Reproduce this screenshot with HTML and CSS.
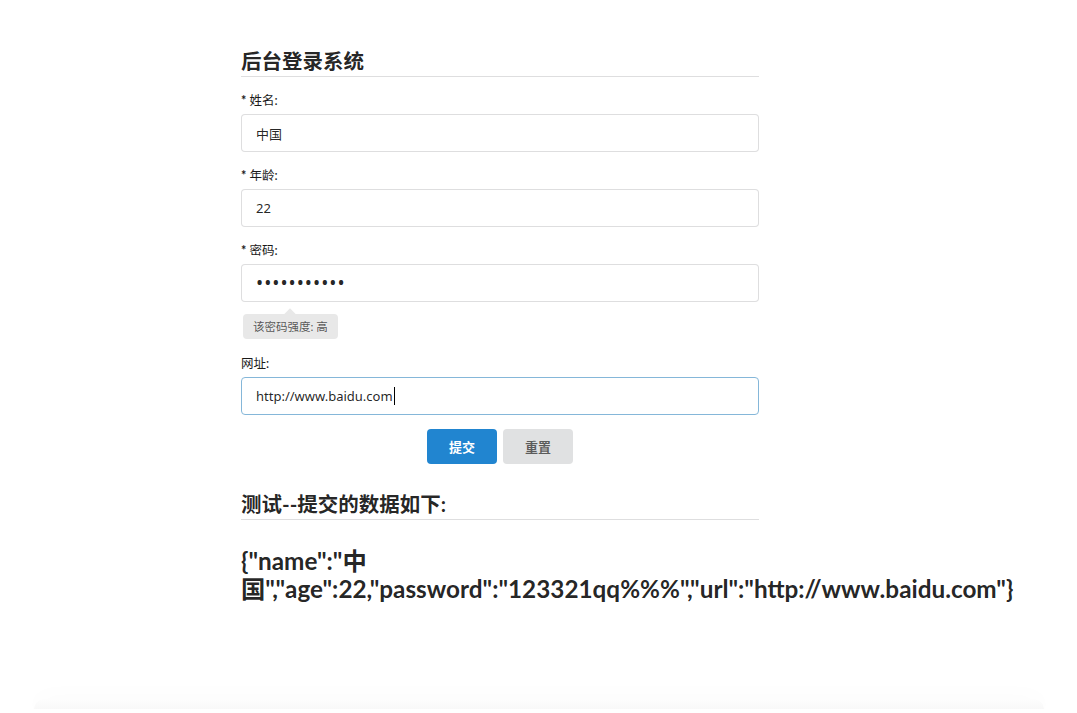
FILE: index.html
```html
<!DOCTYPE html>
<html lang="zh-CN">
<head>
    <meta charset="UTF-8">
    <meta name="viewport" content="width=device-width, initial-scale=1.0">
    <title>后台登录系统</title>
    <link rel="stylesheet" href="styles.css">
</head>
<body>
    <div class="page">
        <form class="login-form">
            <h3 class="dividing-header">后台登录系统</h3>

            <div class="field">
                <label><b>*</b> 姓名:</label>
                <input type="text" value="中国">
            </div>

            <div class="field">
                <label><b>*</b> 年龄:</label>
                <input type="text" value="22">
            </div>

            <div class="field">
                <label><b>*</b> 密码:</label>
                <input type="password" value="123321qq%%%">
                <div class="pointing-label">该密码强度: 高</div>
            </div>

            <div class="field url-field">
                <label>网址:</label>
                <input type="text" class="focused" value="http://www.baidu.com">
                <span class="caret"></span>
            </div>

            <div class="actions">
                <button type="button" class="btn btn-primary">提交</button>
                <button type="button" class="btn">重置</button>
            </div>
        </form>

        <h3 class="dividing-header result-header">测试--提交的数据如下:</h3>
        <div class="result">{"name":"中国","age":22,"password":"123321qq%%%","url":"http://www.baidu.com"}</div>
    </div>

    <div class="page-shadow"></div>
</body>
</html>
```

FILE: styles.css
```css
body {
    margin: 0;
    font-family: Lato, "Noto Sans CJK SC", sans-serif;
    color: rgba(0, 0, 0, 0.87);
    background: #fff;
}

.page {
    width: 518px;
    margin: 0 0 0 241px;
    padding-top: 49px;
}

.dividing-header {
    font-size: 20.5px;
    font-weight: bold;
    line-height: 24px;
    margin: 0 0 15px;
    padding-bottom: 3px;
    border-bottom: 1px solid rgba(34, 36, 38, 0.15);
}

.field {
    margin-bottom: 15px;
}

.field label {
    display: block;
    font-size: 12.5px;
    font-weight: normal;
    line-height: 17px;
    margin-bottom: 5px;
    color: #1a1a1a;
}

.field input {
    display: block;
    box-sizing: border-box;
    width: 100%;
    height: 38px;
    padding: 0 14px;
    font-family: "Noto Sans", "Noto Sans CJK SC", sans-serif;
    font-size: 13px;
    color: rgba(0, 0, 0, 0.87);
    border: 1px solid rgba(34, 36, 38, 0.15);
    border-radius: 4px;
    outline: none;
}

.field input[type="password"] {
    font-size: 19px;
    letter-spacing: 1px;
}

.field input.focused {
    border-color: #85b7d9;
}

.url-field {
    position: relative;
}

.caret {
    position: absolute;
    left: 153px;
    bottom: 10px;
    width: 1px;
    height: 18px;
    background: #000;
}

.pointing-label {
    position: relative;
    display: inline-block;
    margin: 12px 0 1px 2px;
    padding: 0 10px;
    height: 25px;
    line-height: 25px;
    font-size: 11.5px;
    color: rgba(0, 0, 0, 0.65);
    background: #e8e8e8;
    border-radius: 4px;
}

.pointing-label::before {
    content: "";
    position: absolute;
    top: -4px;
    left: 50%;
    width: 8px;
    height: 8px;
    margin-left: -4px;
    background: #e8e8e8;
    transform: rotate(45deg);
}

.actions {
    display: flex;
    justify-content: center;
    gap: 6px;
    margin-top: -1px;
    margin-bottom: 28px;
}

.btn {
    width: 70px;
    height: 35px;
    border: none;
    border-radius: 4px;
    font-family: Lato, "Noto Sans CJK SC", sans-serif;
    font-size: 13px;
    font-weight: bold;
    color: rgba(0, 0, 0, 0.6);
    background: #e0e1e2;
    cursor: pointer;
}

.btn-primary {
    color: #fff;
    background: #2185d0;
}

.result-header {
    margin-bottom: 27px;
}

.result {
    font-size: 24.3px;
    font-weight: bold;
    line-height: 28px;
}

.page-shadow {
    width: 1010px;
    height: 10px;
    margin: 96px auto 0;
    border-radius: 30px 30px 0 0;
    background: linear-gradient(#fdfdfd, #f8f8f8);
    box-shadow: 0 0 24px rgba(0, 0, 0, 0.03);
}
```
